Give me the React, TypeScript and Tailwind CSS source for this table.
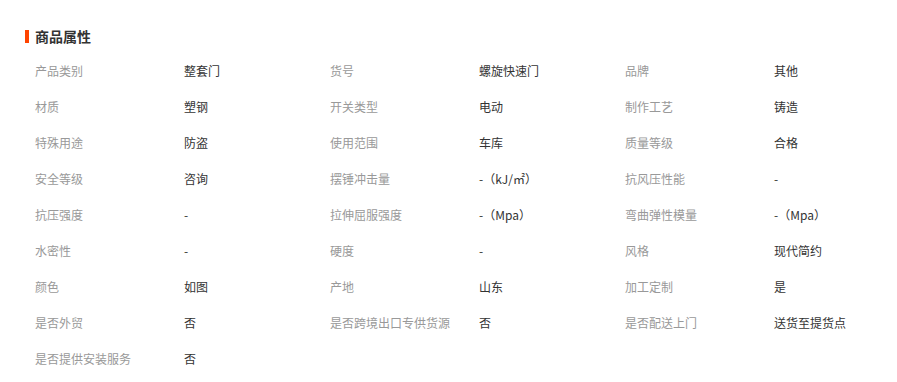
const attrs: [string, string][] = [
  ['产品类别', '整套门'],
  ['货号', '螺旋快速门'],
  ['品牌', '其他'],
  ['材质', '塑钢'],
  ['开关类型', '电动'],
  ['制作工艺', '铸造'],
  ['特殊用途', '防盗'],
  ['使用范围', '车库'],
  ['质量等级', '合格'],
  ['安全等级', '咨询'],
  ['摆锤冲击量', '-（kJ/㎡）'],
  ['抗风压性能', '-'],
  ['抗压强度', '-'],
  ['拉伸屈服强度', '-（Mpa）'],
  ['弯曲弹性模量', '-（Mpa）'],
  ['水密性', '-'],
  ['硬度', '-'],
  ['风格', '现代简约'],
  ['颜色', '如图'],
  ['产地', '山东'],
  ['加工定制', '是'],
  ['是否外贸', '否'],
  ['是否跨境出口专供货源', '否'],
  ['是否配送上门', '送货至提货点'],
  ['是否提供安装服务', '否'],
]

export default function App(): React.ReactElement {
  return (
    <div
      className="w-[897px] h-[382px] bg-white pt-[29px] pl-[25px] text-[#333]"
      style={{ fontFamily: '"Noto Sans CJK SC", "Liberation Sans", sans-serif' }}
    >
      <div className="flex items-center h-[14px]">
        <span className="w-[4px] h-[13px] bg-[#ff4400] mr-[6px]" />
        <span className="text-[14px] font-bold leading-none text-[#333]">商品属性</span>
      </div>
      <div className="grid grid-cols-[149px_146px_149px_146px_149px_146px] pl-[10px] mt-[10px] text-[12px]">
        {attrs.map(([label, value]) => (
          <div key={label} className="contents">
            <div className="h-[36px] flex items-center text-[#999] whitespace-nowrap">{label}</div>
            <div className="h-[36px] flex items-center text-[#333] whitespace-nowrap">{value}</div>
          </div>
        ))}
      </div>
    </div>
  )
}
